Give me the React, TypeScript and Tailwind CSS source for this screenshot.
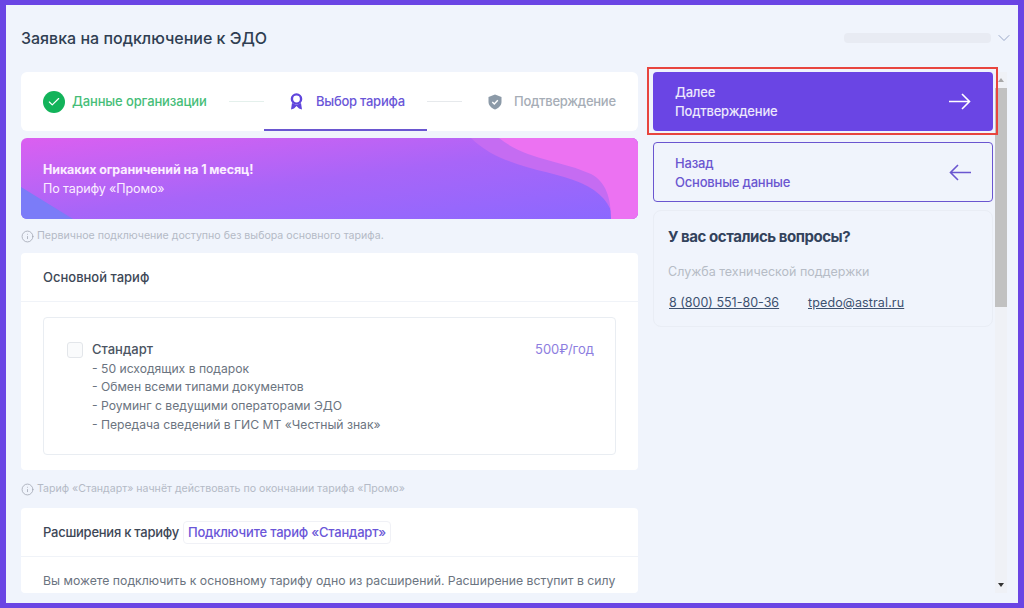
import { Check, ChevronDown, Info } from 'lucide-react';

const font = { fontFamily: 'Inter, "Noto Sans", sans-serif' };

function Hint({ text }: { text: string }) {
  return (
    <div className="h-[34px] flex items-center gap-[3px] text-[10.6px] text-[#b4bac6]">
      <Info className="w-[13px] h-[13px] text-[#a2a8b4]" strokeWidth={1.5} />
      {text}
    </div>
  );
}

function Arrow({ back }: { back?: boolean }) {
  return (
    <svg width="23" height="17" viewBox="0 0 23 17" fill="none" stroke="currentColor" strokeWidth="1.6" className={back ? '' : 'text-white'}>
      {back ? <path d="M22 8.5H1.5 M9 1 L1.5 8.5 L9 16" /> : <path d="M1 8.5H21.5 M14 1 L21.5 8.5 L14 16" />}
    </svg>
  );
}

function Steps() {
  return (
    <div className="h-[59px] bg-white rounded-md flex items-center pl-[22px] text-[13px] tracking-[-0.13px] font-medium shrink-0">
      <div className="w-[22px] h-[22px] rounded-full bg-[#12b35a] flex items-center justify-center">
        <Check className="w-[14px] h-[14px] text-white" strokeWidth={2} />
      </div>
      <span className="ml-[7px] w-[136px] whitespace-nowrap text-[#46bd78]">Данные организации</span>
      <div className="ml-[21px] w-[35px] h-px bg-[#e4f0ec]" />
      <div className="relative h-full w-[163px] flex items-center pl-[25px] text-[#6a56d8]">
        <svg width="15" height="17" viewBox="0 0 15 17">
          <circle cx="7.5" cy="6" r="4.6" fill="none" stroke="#5f45dc" strokeWidth="2.4" />
          <path d="M3 10 L2 16.5 L5 15.5 L7.5 13 L10 15.5 L13 16.5 L12 10 L7.5 12 Z" fill="#5f45dc" />
        </svg>
        <span className="ml-[12px] whitespace-nowrap tracking-[-0.25px]">Выбор тарифа</span>
        <div className="absolute left-0 right-0 bottom-0 h-[2px] bg-[#6a56d0]" />
      </div>
      <div className="w-[35px] h-px bg-[#e6e9ec]" />
      <svg className="ml-[26px]" width="14" height="16" viewBox="0 0 14 16">
        <path d="M7 0.5 L13.5 3 V8 C13.5 11.5 10.5 14.3 7 15.5 C3.5 14.3 0.5 11.5 0.5 8 V3 Z" fill="#8c9aa8" />
        <path d="M4.3 8 L6.3 10 L9.8 6.2" fill="none" stroke="#fff" strokeWidth="1.4" />
      </svg>
      <span className="ml-[12px] whitespace-nowrap tracking-[-0.25px] text-[#a6adb6]">Подтверждение</span>
    </div>
  );
}

function Banner() {
  return (
    <div className="relative h-[81px] mt-[7px] rounded-md overflow-hidden shrink-0 bg-gradient-to-br from-[#db5ff0] via-[#a865f8] to-[#8a68ff]">
      <svg className="absolute inset-0" width="617" height="81" viewBox="0 0 617 81">
        <path d="M0 49 L52 81 H0 Z" fill="#7b7cf8" />
        <path d="M450 0 C480 30 530 32 560 45 C580 54 590 66 592 81 H617 V0 Z" fill="#c56cf2" />
        <path d="M478 0 C505 22 540 22 570 36 C585 44 590 60 590 81 H617 V0 Z" fill="#ec72f2" />
      </svg>
      <div className="relative pl-[22px] pt-[22px] text-[12.5px] tracking-[-0.1px] leading-[19px] text-[#fbeeff]">
        <div className="font-bold">Никаких ограничений на 1 месяц!</div>
        <div>По тарифу «Промо»</div>
      </div>
    </div>
  );
}

function Tariff() {
  return (
    <div className="bg-white rounded-sm shrink-0">
      <div className="h-[49px] pt-[1px] flex items-center pl-[22px] text-[13px] font-medium text-[#3d4756] border-b border-[#f0f3f8]">
        Основной тариф
      </div>
      <div className="px-[22px] pt-[15px] pb-[15px]">
        <div className="h-[138px] border border-[#e9edf2] rounded-sm pl-[23px] pr-[21px] pt-[22px] flex">
          <div className="w-[16px] h-[16px] mt-[2px] border border-[#e3e6ea] bg-[#fafbfc] rounded-[3px] shrink-0" />
          <div className="ml-[9px] text-[12.15px] leading-[18.7px] text-[#6b7480] flex-1">
            <div className="text-[13px] mb-[1px] text-[#4b5462] font-medium">Стандарт</div>
            <div>- 50 исходящих в подарок</div>
            <div>- Обмен всеми типами документов</div>
            <div>- Роуминг с ведущими операторами ЭДО</div>
            <div>- Передача сведений в ГИС МТ «Честный знак»</div>
          </div>
          <div className="text-[13px] leading-[18px] text-[#8d7ee0]">500₽/год</div>
        </div>
      </div>
    </div>
  );
}

function Extensions() {
  return (
    <div className="bg-white rounded-sm flex-1 min-h-0 overflow-hidden">
      <div className="h-[49px] pt-[1px] flex items-center pl-[22px] text-[13px] tracking-[-0.25px] font-medium text-[#3d4756] border-b border-[#f0f3f8]">
        Расширения к тарифу
        <span className="ml-[4px] px-[4px] h-[23px] flex items-center border border-[#f0f1f6] rounded-[4px] text-[#6a56d8] tracking-[-0.2px]">
          Подключите тариф «Стандарт»
        </span>
      </div>
      <div className="pl-[22px] pt-[15px] text-[12.25px] whitespace-nowrap text-[#6b7480]">
        Вы можете подключить к основному тарифу одно из расширений. Расширение вступит в силу
      </div>
    </div>
  );
}

function Sidebar() {
  return (
    <div className="w-[340px] ml-[15px] shrink-0 flex flex-col text-[13px] tracking-[-0.2px] font-medium">
      <div className="relative h-[59px] rounded-[4px] bg-[#6a45e4] pl-[22px] pr-[22px] flex items-center justify-between text-[#ece8fc] leading-[19px]">
        <div>
          <div>Далее</div>
          <div>Подтверждение</div>
        </div>
        <Arrow />
        <div className="absolute -top-[5px] -bottom-[4px] -left-[6px] -right-[5px] border-2 border-[#e8453e]" />
      </div>
      <div className="h-[60px] mt-[11px] pt-[1px] rounded-[4px] border border-[#6a56d0] pl-[21px] pr-[20px] flex items-center justify-between text-[#6a56d0] leading-[19px]">
        <div>
          <div>Назад</div>
          <div>Основные данные</div>
        </div>
        <Arrow back />
      </div>
      <div className="h-[117px] mt-[8px] rounded-lg border border-[#e9edf5] pl-[14px] pt-[16px]">
        <div className="text-[15px] tracking-[-0.45px] leading-[20px] font-bold text-[#33435c]">У вас остались вопросы?</div>
        <div className="mt-[16px] text-[12.5px] tracking-normal font-normal text-[#b6bcc6]">Служба технической поддержки</div>
        <div className="mt-[12px] ml-[1px] flex text-[12.5px] tracking-normal font-normal text-[#3d5170] underline">
          <span className="w-[139px]">8 (800) 551-80-36</span>
          <span className="tracking-[0.12px]">tpedo@astral.ru</span>
        </div>
      </div>
    </div>
  );
}

function Scrollbar() {
  return (
    <div className="w-[12px] ml-[2px] bg-[#eff1f6] flex flex-col items-center shrink-0">
      <div className="mt-[6px] w-0 h-0 border-x-[3px] border-x-transparent border-b-[4px] border-b-[#a8a8a8]" />
      <div className="mt-[6px] w-full h-[219px] bg-[#c1c1c1]" />
      <div className="mt-auto mb-[6px] w-0 h-0 border-x-[3px] border-x-transparent border-t-[4px] border-t-[#333]" />
    </div>
  );
}

export default function App() {
  return (
    <div style={font} className="w-[1024px] h-[608px] border-[6px] border-t-[5px] border-b-[5px] border-[#6a45e4] bg-[#f0f4fc] flex flex-col overflow-hidden">
      <div className="h-[67px] pl-[15px] pr-[4px] pb-[1px] flex items-center justify-between shrink-0">
        <div className="text-[16px] font-medium text-[#2f3e52]">Заявка на подключение к ЭДО</div>
        <div className="flex items-center gap-[3px]">
          <div className="w-[147px] h-[10px] rounded-sm bg-[#e8ebf3]" />
          <ChevronDown className="w-[20px] h-[20px] text-[#9aa8c8]" strokeWidth={1.2} />
        </div>
      </div>
      <div className="flex-1 min-h-0 flex pl-[15px] pr-[5px] pb-[10px]">
        <div className="w-[617px] shrink-0 flex flex-col min-h-0">
          <Steps />
          <Banner />
          <Hint text="Первичное подключение доступно без выбора основного тарифа." />
          <Tariff />
          <div className="h-[38px] flex items-center">
            <Hint text="Тариф «Стандарт» начнёт действовать по окончании тарифа «Промо»" />
          </div>
          <Extensions />
        </div>
        <Sidebar />
        <Scrollbar />
      </div>
    </div>
  );
}
